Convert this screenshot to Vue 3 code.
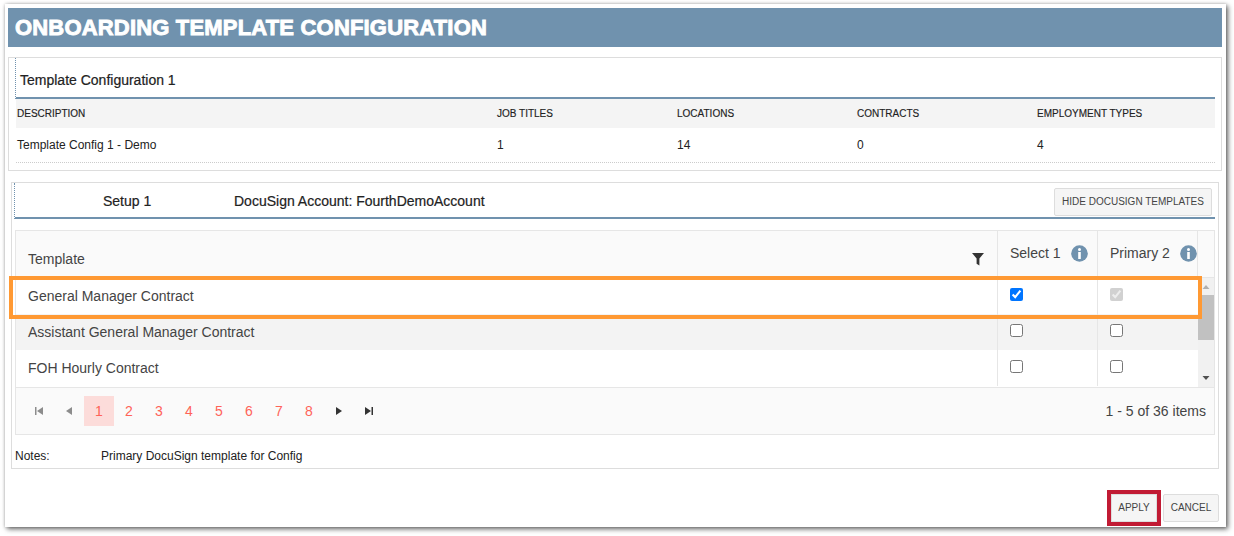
<script setup>
const summaryCols = ['DESCRIPTION', 'JOB TITLES', 'LOCATIONS', 'CONTRACTS', 'EMPLOYMENT TYPES']
const summaryRow = ['Template Config 1 - Demo', '1', '14', '0', '4']
const rows = [
  { name: 'General Manager Contract', select: true, primary: true, disabled: true },
  { name: 'Assistant General Manager Contract', alt: true },
  { name: 'FOH Hourly Contract' },
]
const pages = [1, 2, 3, 4, 5, 6, 7, 8]
</script>

<template>
  <div class="page">
    <div class="card">
      <h1 class="title">ONBOARDING TEMPLATE CONFIGURATION</h1>

      <section class="panel one">
        <div class="panel-head">Template Configuration 1</div>
        <div class="summary head">
          <div v-for="c in summaryCols" :key="c">{{ c }}</div>
        </div>
        <div class="summary body">
          <div v-for="(c, i) in summaryRow" :key="i">{{ c }}</div>
        </div>
      </section>

      <section class="panel two">
        <div class="setup-head">
          <span class="setup-name">Setup 1</span>
          <span class="setup-account">DocuSign Account: FourthDemoAccount</span>
          <button class="btn hide">HIDE DOCUSIGN TEMPLATES</button>
        </div>

        <div class="grid">
          <div class="grid-head">
            <div class="cell c-name">
              <span>Template</span>
              <svg class="filter" width="14" height="14" viewBox="0 0 14 14">
                <path d="M1 1h12L8.400 6.400V13.500L5.600 11.800V6.400z" fill="#333" />
              </svg>
            </div>
            <div class="cell c-check">
              <span>Select 1</span>
              <svg class="info" width="17" height="17" viewBox="0 0 17 17">
                <circle cx="8.500" cy="8.500" r="8.300" fill="#7092ae" />
                <rect x="7.200" y="7" width="2.600" height="7" fill="#fff" />
                <circle cx="8.500" cy="4.500" r="1.500" fill="#fff" />
              </svg>
            </div>
            <div class="cell c-check">
              <span>Primary 2</span>
              <svg class="info" width="17" height="17" viewBox="0 0 17 17">
                <circle cx="8.500" cy="8.500" r="8.300" fill="#7092ae" />
                <rect x="7.200" y="7" width="2.600" height="7" fill="#fff" />
                <circle cx="8.500" cy="4.500" r="1.500" fill="#fff" />
              </svg>
            </div>
            <div class="c-gutter"></div>
          </div>

          <div class="grid-body">
            <div class="rows">
              <div v-for="r in rows" :key="r.name" class="row" :class="{ alt: r.alt }">
                <div class="cell c-name">{{ r.name }}</div>
                <div class="cell c-check"><input type="checkbox" :checked="r.select" /></div>
                <div class="cell c-check"><input type="checkbox" :checked="r.primary" :disabled="r.disabled" /></div>
              </div>
            </div>
            <div class="scrollbar">
              <svg width="16" height="17" viewBox="0 0 16 17"><path d="M4.500 11L8 7l3.500 4z" fill="#b0b0b0" /></svg>
              <div class="thumb"></div>
              <svg class="down" width="16" height="18" viewBox="0 0 16 18"><path d="M4.500 7h7L8 11z" fill="#505050" /></svg>
            </div>
          </div>

          <div class="pager">
            <svg class="nav off" width="30" height="30" viewBox="0 0 30 30"><path d="M11 11h1.500v8H11zM19 11v8l-6-4z" fill="#8c8c8c" /></svg>
            <svg class="nav off" width="30" height="30" viewBox="0 0 30 30"><path d="M18 11v8l-6-4z" fill="#8c8c8c" /></svg>
            <span v-for="p in pages" :key="p" class="num" :class="{ on: p === 1 }">{{ p }}</span>
            <svg class="nav" width="30" height="30" viewBox="0 0 30 30"><path d="M12 11v8l6-4z" fill="#333" /></svg>
            <svg class="nav" width="30" height="30" viewBox="0 0 30 30"><path d="M11 11v8l6-4zM17.500 11H19v8h-1.500z" fill="#333" /></svg>
            <span class="count">1 - 5 of 36 items</span>
          </div>
        </div>

        <div class="notes">
          <span class="notes-label">Notes:</span>
          <span>Primary DocuSign template for Config</span>
        </div>
      </section>

      <div class="actions">
        <button class="btn apply">APPLY</button>
        <button class="btn cancel">CANCEL</button>
      </div>

      <div class="highlight"></div>
    </div>
  </div>
</template>

<style>
html, body { margin: 0; background: #fff; }
</style>

<style scoped>
.page {
  width: 1234px;
  height: 536px;
  overflow: hidden;
  padding: 4px 0 0 5px;
  box-sizing: border-box;
  font-family: "Liberation Sans", Arial, sans-serif;
  color: #222;
}
.card {
  position: relative;
  width: 1221px;
  height: 523px;
  box-sizing: border-box;
  padding: 4px 4px 0 3px;
  background: #fff;
  box-shadow: 2px 2px 5px rgba(0, 0, 0, 0.6), 0 0 3px rgba(0, 0, 0, 0.2);
}
.title {
  margin: 0;
  height: 39px;
  line-height: 40px;
  padding-left: 7px;
  background: #7092ae;
  color: #fff;
  font-size: 22px;
  font-weight: 700;
  -webkit-text-stroke: 0.9px #fff;
  letter-spacing: 0.18px;
}
.panel {
  border: 1px solid #ddd;
  box-sizing: border-box;
}
.one {
  height: 114px;
  margin-top: 10px;
  padding: 0 6px 0 6px;
}
.panel-head {
  height: 39px;
  line-height: 44px;
  padding-left: 4px;
  font-size: 14px;
  -webkit-text-stroke: 0.2px #222;
  border-bottom: 2px solid #7092ae;
  border-left: 1px dotted #7092ae;
}
.summary {
  display: grid;
  grid-template-columns: 480px 180px 180px 180px 180px;
  margin-left: 1px;
  padding-left: 1px;
  align-items: center;
  font-size: 12px;
}
.summary.head {
  height: 29px;
  padding-bottom: 1px;
  box-sizing: border-box;
  background: #f4f4f4;
  font-size: 10px;
  -webkit-text-stroke: 0.15px #222;
}
.summary.body {
  height: 35px;
  border-bottom: 1px dotted #ccc;
  box-sizing: border-box;
}
.two {
  width: 1208px;
  height: 287px;
  margin: 11px 0 0 3px;
  padding: 0 3px 0 2px;
}
.setup-head {
  display: flex;
  align-items: center;
  height: 36px;
  box-sizing: border-box;
  border-bottom: 2px solid #7092ae;
  border-left: 1px dotted #7092ae;
  font-size: 14px;
  -webkit-text-stroke: 0.2px #222;
}
.setup-name { margin: 2px 0 0 88px; width: 131px; }
.setup-account { flex: 1; margin-top: 2px; }
.btn {
  box-sizing: border-box;
  border: 1px solid #ddd;
  border-radius: 2px;
  background: #f5f5f5;
  color: #444;
  font-family: inherit;
  font-size: 10px;
  padding: 0;
  -webkit-text-stroke: 0;
}
.hide {
  width: 158px;
  height: 28px;
  margin: 4px 3px 0 0;
  padding-bottom: 2px;
}
.grid {
  margin: 11px 0 0 1px;
  width: 1200px;
  height: 205px;
  box-sizing: border-box;
  border: 1px solid #e6e6e6;
  font-size: 14px;
  color: #444;
}
.grid-head {
  display: flex;
  height: 46px;
  background: #fafafa;
  border-bottom: 1px solid #e6e6e6;
}
.cell {
  display: flex;
  align-items: center;
  box-sizing: border-box;
}
.c-name {
  width: 981px;
  padding-left: 12px;
  position: relative;
}
.c-check {
  width: 100px;
  padding-left: 12px;
  border-left: 1px solid #e6e6e6;
}
.c-gutter { flex: 1; border-left: 1px solid #e6e6e6; }
.grid-head .c-name span { margin-top: 10px; }
.grid-head .c-check { padding-bottom: 2px; }
.filter {
  position: absolute;
  right: 12px;
  top: 21px;
}
.info { margin-left: 10px; flex: none; }
.grid-body {
  display: flex;
  height: 109px;
  border-bottom: 1px solid #e6e6e6;
}
.rows { width: 1182px; }
.row {
  display: flex;
  height: 36px;
  background: #fff;
}
.row.alt { background: #f3f3f3; }
.row .c-name { padding-bottom: 1px; }
.row .c-check { padding-bottom: 3px; }
.row input {
  width: 13px;
  height: 13px;
  margin: 0;
}
.scrollbar {
  flex: 1;
  position: relative;
  background: #f1f1f1;
}
.scrollbar svg { display: block; }
.thumb {
  height: 45px;
  background: #c1c1c1;
}
.down {
  position: absolute;
  bottom: 0;
  left: 0;
}
.pager {
  display: flex;
  align-items: center;
  height: 46px;
  box-sizing: border-box;
  padding: 0 0 0 8px;
  background: #fafafa;
}
.nav { flex: none; }
.num {
  width: 30px;
  height: 30px;
  line-height: 30px;
  text-align: center;
  color: #ff6358;
}
.num.on { background: #fcdcda; }
.count { margin-left: auto; margin-right: 8px; }
.notes {
  display: flex;
  margin: 14px 0 0 1px;
  font-size: 12px;
  line-height: 14px;
}
.notes-label { width: 86px; }
.actions {
  display: flex;
  justify-content: flex-end;
  gap: 6px;
  align-items: center;
  margin: 25px 0 0 0;
  padding-right: 3px;
  height: 28px;
}
.apply {
  width: 46px;
  height: 28px;
  padding-bottom: 2px;
  border-radius: 0;
  outline: 4px solid #c11b34;
}
.cancel { width: 56px; height: 28px; padding-bottom: 2px; }
.highlight {
  position: absolute;
  left: 4px;
  top: 272px;
  width: 1193px;
  height: 43px;
  box-sizing: border-box;
  border: 4px solid #ff9933;
  pointer-events: none;
}
</style>
